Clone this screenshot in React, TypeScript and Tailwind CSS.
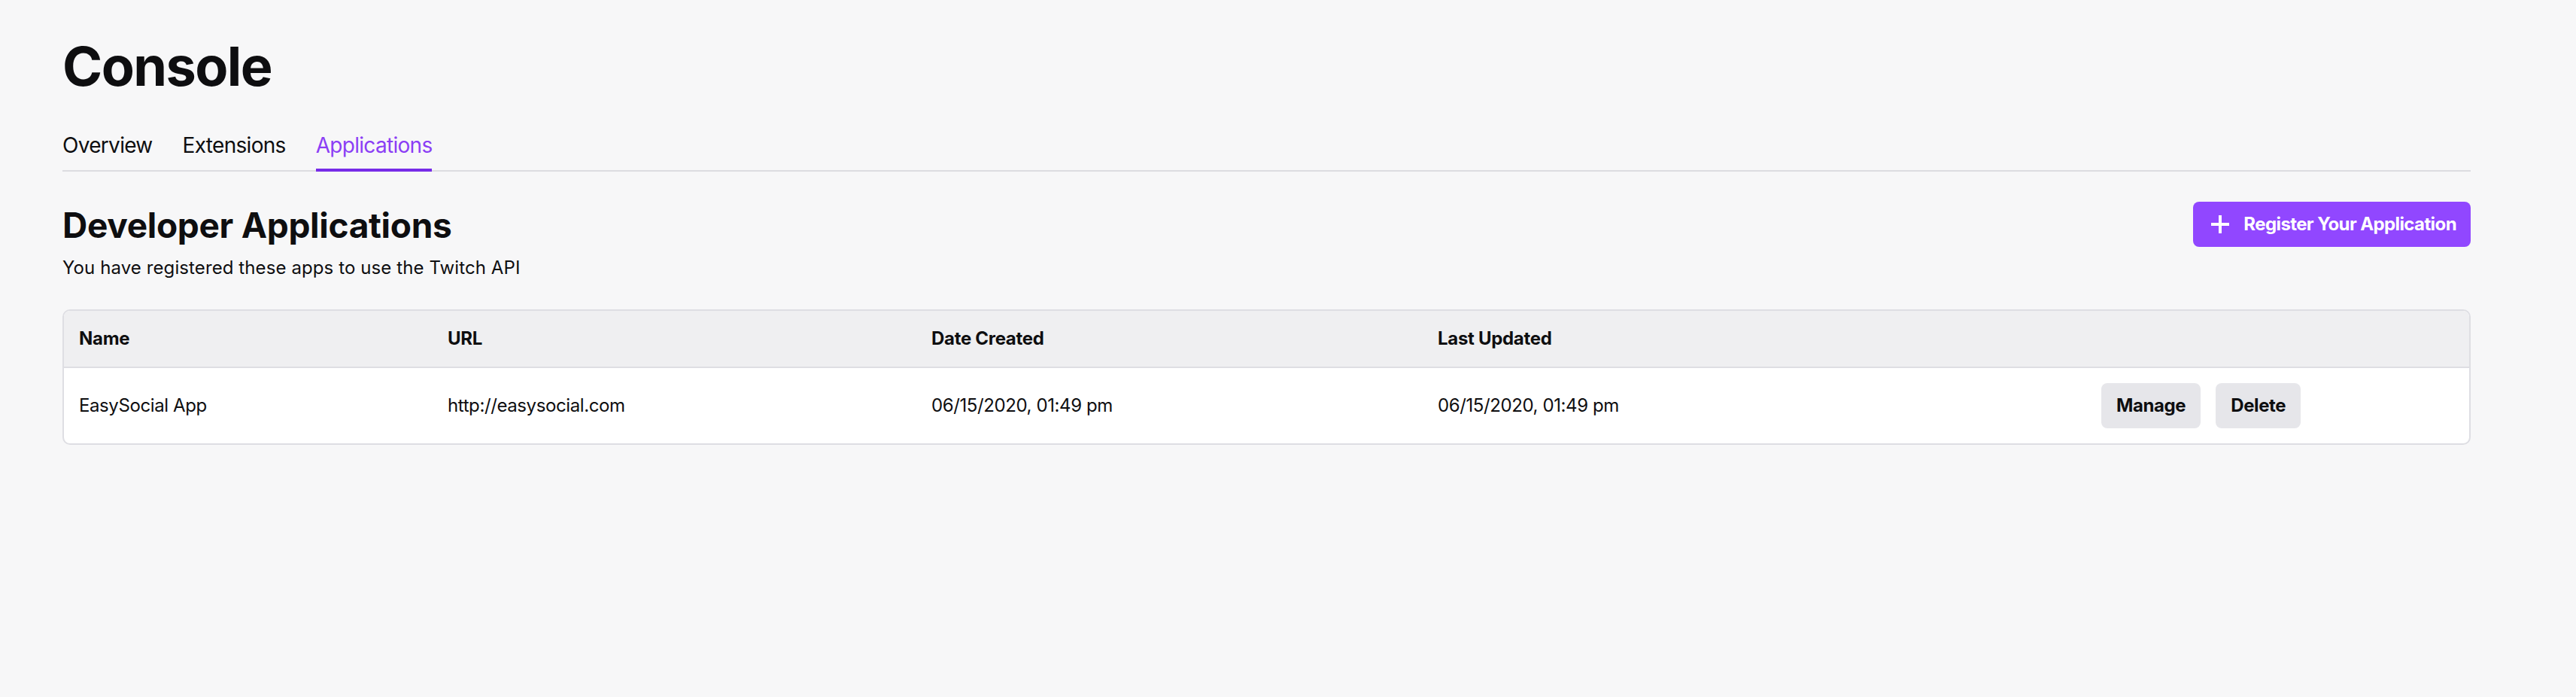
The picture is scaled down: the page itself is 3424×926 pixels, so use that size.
import React from "react";

function PlusIcon() {
  return (
    <svg width="24" height="24" viewBox="0 0 24 24" className="shrink-0">
      <path d="M12 0v24M0 12h24" stroke="#ffffff" strokeWidth="4" fill="none" />
    </svg>
  );
}

export default function App() {
  const cols = "grid grid-cols-[490px_643px_673px_882px_1fr]";
  return (
    <div className="min-h-[926px] w-full bg-[#f7f7f8] font-['Inter',sans-serif] text-[#0e0e10]">
      <div className="ml-[83px] w-[3201px] pt-[52px]">
        <h1 className="text-[72px] font-bold leading-none tracking-[-1.6px]">Console</h1>

        <nav className="mt-[55px] flex gap-[40px] border-b-2 border-[#dcdce0] text-[28px] leading-none tracking-[-0.7px]">
          <div className="-mb-[2px] border-b-4 border-transparent pb-[17px]">Overview</div>
          <div className="-mb-[2px] border-b-4 border-transparent pb-[17px]">Extensions</div>
          <div className="-mb-[2px] border-b-4 border-[#772ce8] pb-[17px] text-[#8b3ef5]">Applications</div>
        </nav>

        <div className="mt-[40px] flex items-start justify-between">
          <div className="mt-[8px]">
            <h2 className="text-[46px] font-bold leading-none tracking-[-0.3px]">Developer Applications</h2>
            <p className="mt-[22px] text-[24px] leading-none tracking-[0.1px]">You have registered these apps to use the Twitch API</p>
          </div>
          <button className="flex h-[60px] items-center gap-[19px] rounded-[8px] bg-[#9147ff] pl-[24px] pr-[19px] text-[24px] font-bold tracking-[-0.6px] text-white">
            <PlusIcon />
            <span>Register Your Application</span>
          </button>
        </div>

        <div className="mt-[43px] overflow-hidden rounded-[10px] border-2 border-[#dedee3] bg-white">
          <div className={`${cols} h-[76px] items-center border-b-2 border-[#dedee3] bg-[#efeff1] text-[24px] font-bold tracking-[-0.3px]`}>
            <div className="pl-[20px]">Name</div>
            <div className="pl-[20px]">URL</div>
            <div className="pl-[20px]">Date Created</div>
            <div className="pl-[20px]">Last Updated</div>
            <div />
          </div>
          <div className={`${cols} h-[100px] items-center text-[24px] tracking-[-0.4px]`}>
            <div className="pl-[20px]">EasySocial App</div>
            <div className="pl-[20px]">http://easysocial.com</div>
            <div className="pl-[20px]">06/15/2020, 01:49 pm</div>
            <div className="pl-[20px]">06/15/2020, 01:49 pm</div>
            <div className="flex gap-[20px] pl-[20px]">
              <button className="h-[60px] rounded-[8px] bg-[#e6e6ea] px-[20px] text-[24px] font-bold tracking-[-0.4px]">Manage</button>
              <button className="h-[60px] rounded-[8px] bg-[#e6e6ea] px-[20px] text-[24px] font-bold tracking-[-0.4px]">Delete</button>
            </div>
          </div>
        </div>
      </div>
    </div>
  );
}
